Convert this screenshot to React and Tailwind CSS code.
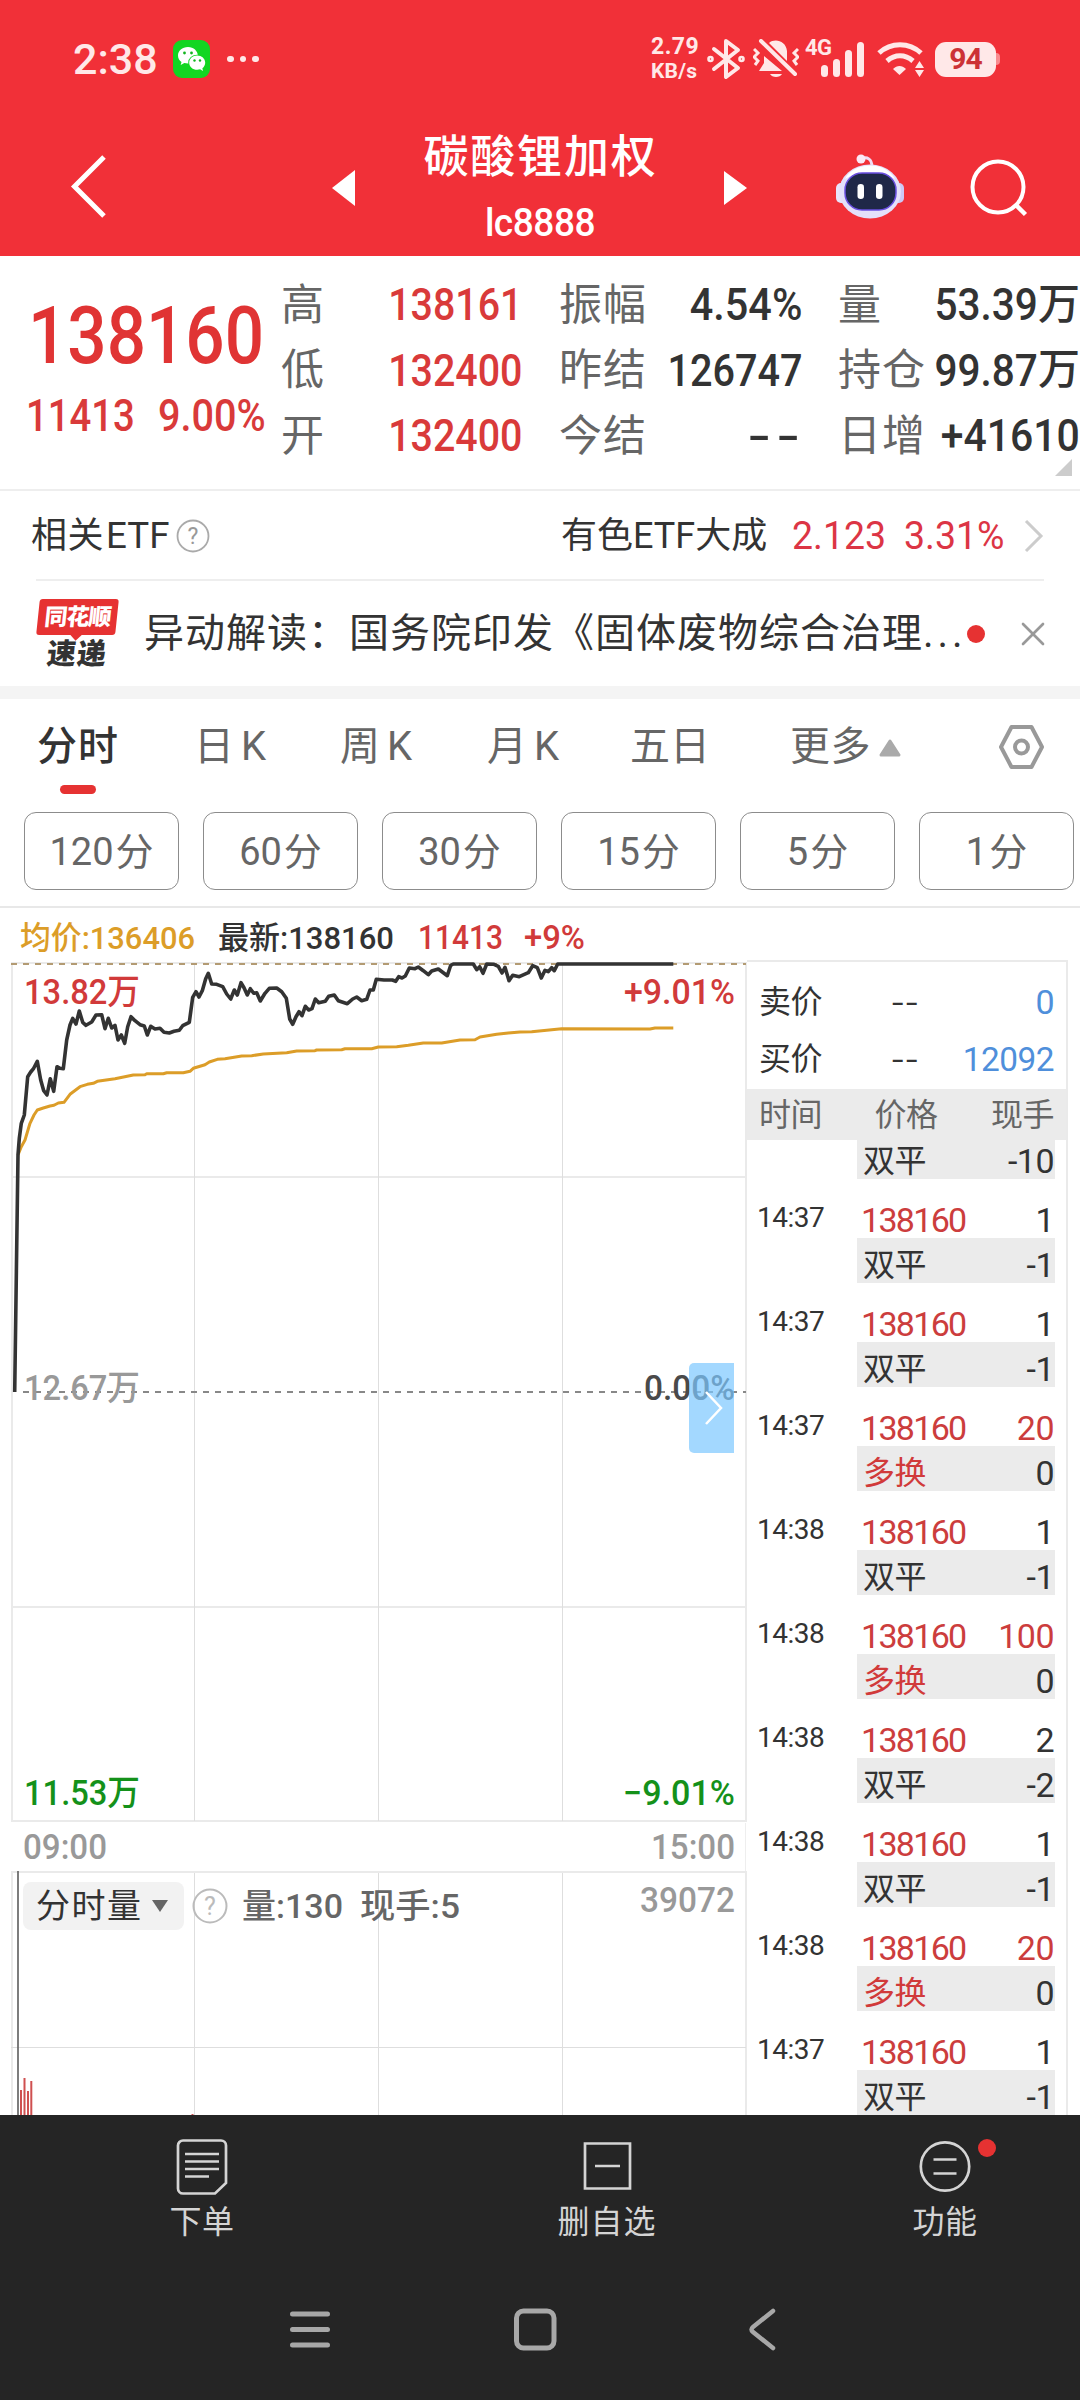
import { X } from 'lucide-react';

const quoteColumns = [
  {
    wrap: 'w-[242px] pl-px',
    rows: [
      { label: '高', value: '138161', up: true, stretch: 'scale-x-[0.875]' },
      { label: '低', value: '132400', up: true, stretch: 'scale-x-[0.875]' },
      { label: '开', value: '132400', up: true, stretch: 'scale-x-[0.875]' },
    ],
  },
  {
    wrap: 'w-[243px] ml-[37px]',
    rows: [
      { label: '振幅', value: '4.54%', stretch: 'scale-x-[0.92]' },
      { label: '昨结', value: '126747', stretch: 'scale-x-[0.88]' },
      { label: '今结', value: '--', stretch: 'scale-x-[1.5] tracking-[4px] mr-[-4px]' },
    ],
  },
  {
    wrap: 'w-[242px] ml-[36px]',
    rows: [
      { label: '量', value: '53.39', unit: '万', stretch: 'scale-x-[0.9]' },
      { label: '持仓', value: '99.87', unit: '万', stretch: 'scale-x-[0.9]' },
      { label: '日增', value: '+41610', stretch: 'scale-x-[0.91]' },
    ],
  },
];

const periods = ['120', '60', '30', '15', '5', '1'];

const ticks = [
  { time: '14:37', vol: '1', type: '双平', diff: '-1' },
  { time: '14:37', vol: '1', type: '双平', diff: '-1' },
  { time: '14:37', vol: '20', big: true, type: '多换', diff: '0' },
  { time: '14:38', vol: '1', type: '双平', diff: '-1' },
  { time: '14:38', vol: '100', big: true, type: '多换', diff: '0' },
  { time: '14:38', vol: '2', type: '双平', diff: '-2' },
  { time: '14:38', vol: '1', type: '双平', diff: '-1' },
  { time: '14:38', vol: '20', big: true, type: '多换', diff: '0' },
  { time: '14:37', vol: '1', type: '双平', diff: '-1' },
];

const priceLine =
  '14.7,430 18,193 19.3,176.3 21.3,161.3 24.3,153 27.7,114.7 30.7,110 33.7,106.3 37.3,99.3 40.7,118 43.7,128.7 47,133 50.3,116.7 53.7,129.3 57,104.7 60,106.3 63.3,106.7 66.7,78 70,63 72.7,56.3 76,62 79.3,49 82.7,60.3 86,63.3 91.7,60 96,53 101.7,52.7 105,66.7 108.3,56.3 111.7,66 115,63.3 118,78 121.3,73 124.7,81.3 127.7,64.7 131,54.7 135,58.7 140,62.7 144.3,64 147.3,73 150.7,64.3 155,67 160,66.3 164,70.3 169.3,71 174,69.3 179.3,68.3 182.7,63.7 189.3,60.3 192.7,35.3 196,29.7 199,35 202.3,28.7 205.7,16.7 208.3,11.3 211.7,22 216.7,22.3 222.7,24.7 226.7,32 230.7,37 234.3,28 237.3,33 241,20.7 244,25.7 247.3,33 250.3,26.7 253.7,31.3 256.7,30.7 260.3,39 265,31.3 269.3,26.3 276.7,26 281.7,29.7 286.3,36.3 289.7,57 292.7,62.3 296,54.7 299,49.7 302,53.7 305.3,44.3 308.7,48 312,46.7 315.3,37 318.7,40.7 325.3,39.3 328.7,34.3 334.3,33 338.3,38.7 347.3,41.7 352.7,37 356.7,35 361.7,38.7 366.7,37.3 370,28 373.3,28 376.3,17.3 384,18 392.3,18 395.7,19.3 398.7,14.7 402,16 405.3,14 409.3,6 415,6.7 418.3,5 423.3,8.7 428.3,12.7 431.7,9 438.3,7 443.3,10.7 447.3,13.7 450.7,3.3 453.3,2 473.3,2 476.7,7.7 479.7,4.7 483,11.3 486.7,2 494,2.3 498.3,4.3 502,11 505,5.3 509,18.7 512.7,13.3 519.3,14.7 528.3,10.7 532.7,3.7 537.3,5.7 541.3,16 545,8.3 548.3,9.7 551.7,5.7 554.3,8.7 557.7,2 673.3,2';

const averageLine =
  '18,193 21.3,184.7 25,178 30,161.3 34,153 37.3,148 43.3,146 50,144 54,143.3 58.3,141 64,140.3 70,132.3 80,124.7 87.3,122.3 93.3,121.3 97.3,119.3 115,116.7 133.3,113 145,112.7 146.7,111.7 163.3,111.7 166.7,110.7 183.3,110.7 190,109.3 193.3,106.3 205,102.7 209.3,100 217.3,97.3 225,96.7 241.7,94 251.7,93.7 263.3,92 286.7,90.7 296.7,89 315,88.7 316.7,88 341.7,87.7 345,86.7 371.7,86.7 378.3,85 396.7,84.7 408.3,83.3 423.3,81 441.7,81 460,78 475,77.7 480,75 496.7,72.3 508.3,71 520,70 531.7,69.7 546.7,68.3 561.7,66.7 650,67 655,66 673.3,66';

// Stretched label used inside the charts, so the digits keep a narrow DIN look
function Label({ x, y, w, size = 35, weight = 500, fill, children }) {
  return (
    <text x={x} y={y} fontSize={size} fontWeight={weight} fill={fill} textLength={w} lengthAdjust="spacingAndGlyphs">
      {children}
    </text>
  );
}

function StatusBar() {
  return (
    <div className="flex h-[118px] items-center justify-between pl-[73px] pr-[80px] text-[#ffe8e8]">
      <div className="flex items-center">
        <span className="w-[84px] text-[43px] font-medium leading-none">2:38</span>
        <svg className="ml-4 h-[38px] w-[37px]" viewBox="0 0 37 38">
          <rect width="37" height="38" rx="9" fill="#12d622" />
          <path d="M15 7c-5.800 0-10 3.800-10 8.500 0 2.700 1.300 5 3.500 6.500l-.8 3 3.600-1.900c1.200.3 2.400.5 3.700.5 5.600 0 9.800-3.700 9.800-8.100S20.700 7 15 7z" fill="#fff" />
          <ellipse cx="24.200" cy="22.700" rx="9" ry="7.900" fill="#12d622" />
          <path d="M24.200 15.600c-4.500 0-8 3.200-8 7.100s3.500 7.100 8 7.100c1 0 2-.2 2.900-.5l2.900 1.700-.6-2.800c1.700-1.300 2.800-3.300 2.800-5.500 0-3.900-3.500-7.100-8-7.100z" fill="#fff" />
          <circle cx="11.500" cy="13" r="1.400" fill="#12b41f" />
          <circle cx="18.500" cy="13" r="1.400" fill="#12b41f" />
          <circle cx="21.500" cy="20.500" r="1.200" fill="#12b41f" />
          <circle cx="27" cy="20.500" r="1.200" fill="#12b41f" />
        </svg>
        <div className="ml-[17px] flex gap-[6px]">
          <i className="size-[6.5px] rounded-full bg-[#ffe8e8]" />
          <i className="size-[6.5px] rounded-full bg-[#ffe8e8]" />
          <i className="size-[6.5px] rounded-full bg-[#ffe8e8]" />
        </div>
      </div>

      <div className="flex items-center">
        <div className="w-[56px] text-[23px] font-bold leading-[24px]">
          <div className="tracking-[0.5px]">2.79</div>
          <div className="text-[21px] tracking-[0.2px]">KB/s</div>
        </div>
        <svg className="h-[42px] w-[38px]" viewBox="0 0 38 42" fill="none" stroke="currentColor" strokeWidth="4" strokeLinejoin="round" strokeLinecap="round">
          <path d="M7 11l24 19-12 9V3l12 9L7 31" />
          <circle cx="3.500" cy="21" r="1.300" />
          <circle cx="34.500" cy="21" r="1.300" />
        </svg>
        <svg className="ml-[8px] h-[40px] w-[46px]" viewBox="0 0 46 40" fill="currentColor">
          <path d="M16 4c6-5 17-2 18 8v10zM11 17l18 15H6l5-8zM17 35h12c-2 4-10 4-12 0z" />
          <path d="M8 2l34 33" stroke="currentColor" strokeWidth="4" strokeLinecap="round" />
          <path d="M1 10l4 4-4 4 4 4-3 4M45 10l-4 4 4 4-4 4 3 4" fill="none" stroke="currentColor" strokeWidth="3" />
        </svg>
        <div className="relative ml-[22px] flex h-[36px] w-[46px] items-end gap-[5px]">
          <span className="absolute -left-[16px] -top-[4px] text-[22px] font-bold leading-[21px] tracking-[-0.5px]">4G</span>
          <i className="h-3 w-[7px] rounded-sm bg-[#ffe8e8]" />
          <i className="h-[18px] w-[7px] rounded-sm bg-[#ffe8e8]" />
          <i className="h-[27px] w-[7px] rounded-sm bg-[#ffe8e8]" />
          <i className="h-[35px] w-[7px] rounded-sm bg-[#ffe8e8]" />
        </div>
        <svg className="ml-[10px] h-[36px] w-[48px]" viewBox="0 0 48 36" fill="none" stroke="currentColor" strokeWidth="5">
          <path d="M2 12c12-11 30-11 42 0M10 20c8-7 18-7 26 0" />
          <path d="M16 28c4-4 9-4 13 0l-6.500 6z" fill="currentColor" stroke="none" />
          <path d="M38 27l4.500-7 4.500 7zM38 29h9l-4.500 7z" fill="currentColor" stroke="none" />
        </svg>
        <div className="ml-[10px] flex h-[35px] w-[61px] items-center justify-center rounded-[11px] bg-[#ffe8e8] text-[30px] font-bold leading-none tracking-[-1px] text-[#cc3236]">94</div>
        <i className="h-3 w-1 rounded-r-sm bg-[#f98b8f]" />
      </div>
    </div>
  );
}

function TitleBar() {
  return (
    <div className="flex h-[138px] text-white">
      <svg className="ml-[70px] mt-[36px] h-[64px] w-[38px]" viewBox="0 0 38 64" fill="none" stroke="currentColor" strokeWidth="5">
        <path d="M34 3L4.500 32.500 34 62" />
      </svg>
      <svg className="ml-[224px] mt-[52px] h-[36px] w-[23px]" viewBox="0 0 23 36" fill="currentColor">
        <path d="M23 0v36L0 18z" />
      </svg>
      <div className="flex w-[369px] flex-col items-center">
        <h1 className="mt-[15px] whitespace-nowrap pl-[2px] text-[45px] font-medium leading-[50px] tracking-[1.8px]">碳酸锂加权</h1>
        <span className="mt-[19px] scale-x-[0.95] text-[39px] font-medium leading-[42px] tracking-[-0.5px]">lc8888</span>
      </div>
      <svg className="mt-[52px] h-[36px] w-[23px]" viewBox="0 0 23 36" fill="currentColor">
        <path d="M0 1v34l23-17z" />
      </svg>
      <svg className="ml-[88px] mt-[35px] h-[66px] w-[70px]" viewBox="0 0 70 66">
        <path d="M26 6c6-3 11 0 11 8" fill="none" stroke="#f0dcf4" strokeWidth="3" />
        <circle cx="26" cy="6" r="4.500" fill="#fbe9f6" />
        <rect x="1" y="30" width="12" height="20" rx="5" fill="#e8e4fb" />
        <rect x="57" y="30" width="12" height="20" rx="5" fill="#cdc8f5" />
        <ellipse cx="35" cy="38.500" rx="31" ry="27" fill="#e4e0fa" />
        <path d="M10 26c8-17 40-19 50 0-14-9-36-9-50 0z" fill="#fff" />
        <rect x="10" y="20" width="51" height="37" rx="17" fill="#1f2848" stroke="#6a4fe0" strokeWidth="1.500" />
        <rect x="22.500" y="31" width="6.500" height="15" rx="3.200" fill="#fff" />
        <rect x="41" y="31" width="6.500" height="15" rx="3.200" fill="#fff" />
      </svg>
      <svg className="ml-[65px] mt-[41px] h-[60px] w-[60px]" viewBox="0 0 60 60" fill="none" stroke="currentColor" strokeWidth="4">
        <circle cx="28" cy="28" r="25.500" />
        <path d="M45.500 45.500l10 10" strokeWidth="4.500" />
      </svg>
    </div>
  );
}

function Quote() {
  return (
    <section className="relative flex h-[235px] shrink-0 border-b-2 border-[#eeeeee]">
      <div className="w-[280px] shrink-0 text-[#e03434]">
        <div className="ml-[28px] mt-[42px] w-0 origin-left scale-x-[0.865] whitespace-nowrap text-[80px] font-medium leading-[76px]">138160</div>
        <div className="mt-[18px] flex pl-[26px] text-[44px] font-medium leading-[48px] text-[#d93a3a]">
          <span className="w-[132px] origin-left scale-x-[0.87]">11413</span>
          <span className="origin-left scale-x-[0.9]">9.00%</span>
        </div>
      </div>
      {quoteColumns.map((col) => (
        <div key={col.rows[0].label} className={`${col.wrap} shrink-0 pt-4`}>
          {col.rows.map((row) => (
            <div key={row.label} className="flex h-[65.5px] items-center justify-between whitespace-nowrap">
              <span className="text-[43px] leading-[66px] tracking-[1px] text-[#666666]">{row.label}</span>
              <div className={`flex w-0 items-center justify-end text-[45px] font-medium ${row.up ? 'text-[#d93a3a]' : 'text-[#333333]'}`}>
                <span className={`origin-right ${row.stretch}`}>{row.value}</span>
                {row.unit && <span className="text-[42px] leading-[60px]">{row.unit}</span>}
              </div>
            </div>
          ))}
        </div>
      ))}
      <svg className="absolute bottom-[13px] right-2 size-[17px]" viewBox="0 0 17 17">
        <path d="M17 0v17H0z" fill="#cccccc" />
      </svg>
    </section>
  );
}

function EtfRow() {
  return (
    <div className="flex h-[88px] shrink-0 items-center whitespace-nowrap pl-[31px] pt-[2px] text-[36px] leading-none text-[#333333]">
      <span className="w-[75px] tracking-[0.5px]">相关</span>
      <span className="w-[61px] origin-left scale-x-[1.02]">ETF</span>
      <svg className="ml-[9px] size-[34px]" viewBox="0 0 34 34">
        <circle cx="17" cy="17" r="15.500" fill="none" stroke="#aaaaaa" strokeWidth="1.800" />
        <text x="17" y="25" textAnchor="middle" fontSize="23" fill="#999999">?</text>
      </svg>
      <span className="ml-[351px] w-[231px]">有色ETF大成</span>
      <span className="w-[112px] origin-left scale-x-[0.96] text-[39px] text-[#dc3545]">2.123</span>
      <span className="w-[107px] origin-left scale-x-[0.96] text-[39px] text-[#dc3545]">3.31%</span>
      <svg className="ml-[13px] h-[34px] w-[20px]" viewBox="0 0 20 34" fill="none" stroke="#cccccc" strokeWidth="3">
        <path d="M2 2l15 15L2 32" />
      </svg>
    </div>
  );
}

function NewsRow() {
  return (
    <div className="mx-9 flex h-[107px] shrink-0 items-center border-t-2 border-[#eeeeee]">
      <div className="flex w-[83px] shrink-0 flex-col items-center">
        <div className="relative flex h-[36px] w-[79px] -skew-x-6 items-center justify-center rounded-[3px] bg-[#e63232] text-[23px] font-black leading-none tracking-[-1px] text-white">
          同花顺
          <i className="absolute -bottom-[4px] left-[36px] size-2 rotate-45 bg-[#e63232]" />
        </div>
        <div className="mt-[5px] -skew-x-6 text-[29px] font-black leading-[28px] tracking-[1px] text-[#333333]">速递</div>
      </div>
      <p className="ml-[25px] w-[823px] shrink-0 whitespace-nowrap text-[40px] leading-none tracking-[1px] text-[#333333]">异动解读：国务院印发《固体废物综合治理<span className="tracking-[4px]">...</span></p>
      <i className="size-[18px] shrink-0 rounded-full bg-[#e63232]" />
      <X className="ml-[28px] shrink-0 text-[#999999]" size={40} strokeWidth={1.6} />
    </div>
  );
}

function Tabs() {
  return (
    <nav className="flex h-[113px] shrink-0 whitespace-nowrap pt-[19px] text-[40px] leading-[58px] text-[#666666]">
      <div className="ml-[37px] flex w-[157px] flex-col font-medium tracking-[1px] text-[#333333]">
        分时
        <i className="ml-[23px] mt-[9px] h-[9px] w-9 rounded-full bg-[#e63232]" />
      </div>
      <span className="w-[146px] tracking-[7px]">日K</span>
      <span className="w-[147px] tracking-[7px]">周K</span>
      <span className="w-[143px] tracking-[7px]">月K</span>
      <span className="w-[160px]">五日</span>
      <span className="tracking-[0.5px]">更多</span>
      <svg className="ml-[8px] mt-[21px] h-[18px] w-[22px]" viewBox="0 0 22 18">
        <path d="M11 2l9 14H2z" fill="#aaaaaa" stroke="#aaaaaa" strokeWidth="3" strokeLinejoin="round" />
      </svg>
      <svg className="ml-[97px] mt-[6px] h-[46px] w-[47px]" viewBox="0 0 47 46" fill="none" stroke="#999999" strokeWidth="4" strokeLinejoin="round">
        <path d="M13.500 3h20L44 23 33.500 43h-20L3 23z" />
        <circle cx="23.500" cy="23" r="6.500" />
      </svg>
    </nav>
  );
}

function PriceChart() {
  return (
    <div className="relative h-[861px]">
      <svg className="h-[861px] w-[747px]" viewBox="0 0 747 861">
        <g stroke="#eaeaea" strokeWidth="2" fill="none">
          <path d="M11 1h736M12 0v860M746 0v860M11 215h735M11 645h735M11 859h735" />
          <path d="M194.500 2v857M378.500 2v857M562.500 2v857" stroke="#dedede" strokeWidth="1" />
        </g>
        <path d="M11 2h735" stroke="#b39b73" strokeWidth="2" strokeDasharray="6 6" />
        <path d="M23 430h723" stroke="#888888" strokeWidth="2" strokeDasharray="6 6" />
        <polyline points={averageLine} fill="none" stroke="#dc9d28" strokeWidth="3" strokeLinejoin="round" />
        <polyline points={priceLine} fill="none" stroke="#333333" strokeWidth="3.600" strokeLinejoin="round" />
        <Label x="24" y="42" w="116" fill="#d13a3a">13.82万</Label>
        <Label x="624" y="42" w="111" fill="#d13a3a">+9.01%</Label>
        <Label x="24" y="438" w="116" fill="#999999">12.67万</Label>
        <Label x="644" y="438" w="91" fill="#4a4a4a">0.00%</Label>
        <Label x="24" y="843" w="116" fill="#14911a">11.53万</Label>
        <Label x="623" y="843" w="112" fill="#14911a">−9.01%</Label>
      </svg>
      <button className="absolute left-[689px] top-[401px] flex h-[90px] w-[45px] items-center justify-center rounded-l-[5px] bg-[#7cc8ff]/70">
        <svg className="ml-1 h-[34px] w-[20px]" viewBox="0 0 20 34" fill="none" stroke="#ffffff" strokeWidth="2.500">
          <path d="M2 1l15 16L2 33" />
        </svg>
      </button>
    </div>
  );
}

function VolumeChart() {
  return (
    <div className="relative h-[244px]">
      <svg className="h-[244px] w-[747px]" viewBox="0 0 747 244">
        <path d="M11 1h736M12 0v244M746 0v244" stroke="#eaeaea" strokeWidth="2" />
        <path d="M11 176.500h735M194.500 2v242M378.500 2v242M562.500 2v242" stroke="#dedede" />
        <path d="M18 0v244" stroke="#666666" strokeWidth="1.700" />
        <path d="M21 219v25M24.500 207v37M28 220v24M31.300 210v34" stroke="#cf5050" strokeWidth="2" />
        <path d="M192.500 243v1" stroke="#cf5050" strokeWidth="2" />
        <Label x="640" y="41" w="95" fill="#999999">39072</Label>
      </svg>
      <div className="absolute left-[23px] top-[11px] flex items-center whitespace-nowrap text-[34px] leading-none text-[#666666]">
        <button className="flex h-12 w-[161px] items-center rounded-lg bg-[#f2f2f2] pl-[13px] tracking-[1.5px] text-[#333333]">
          分时量
          <svg className="ml-2 h-3 w-[18px]" viewBox="0 0 18 12">
            <path d="M1 0h16L9 12z" fill="#666666" />
          </svg>
        </button>
        <svg className="ml-[8px] size-[36px]" viewBox="0 0 36 36">
          <circle cx="18" cy="18" r="16.500" fill="none" stroke="#bbbbbb" strokeWidth="2" />
          <text x="18" y="27" textAnchor="middle" fontSize="25" fill="#bbbbbb">?</text>
        </svg>
        <svg className="ml-[14px] h-12 w-[220px]" viewBox="0 0 220 48" fill="#666666">
          <Label x="0" y="36" w="101" size={34} fill="#666666">量:130</Label>
          <Label x="118" y="36" w="100" size={34} fill="#666666">现手:5</Label>
        </svg>
      </div>
    </div>
  );
}

function ChartPane() {
  return (
    <div className="w-[747px] shrink-0">
      <svg className="h-[54px] w-[747px]" viewBox="0 0 747 54">
        <Label x="20" y="41" w="175" size={32} fill="#dc9d28">均价:136406</Label>
        <Label x="218" y="41" w="176" size={32} fill="#333333">最新:138160</Label>
        <Label x="418" y="41" w="85" size={33} fill="#d13a3a">11413</Label>
        <Label x="524" y="41" w="61" size={33} fill="#d13a3a">+9%</Label>
      </svg>
      <PriceChart />
      <svg className="h-[48px] w-[747px]" viewBox="0 0 747 48">
        <path d="M745.500 0v48" stroke="#eeeeee" />
        <Label x="23" y="36" w="84" fill="#999999">09:00</Label>
        <Label x="651" y="36" w="84" fill="#999999">15:00</Label>
      </svg>
      <VolumeChart />
    </div>
  );
}

function TickPane() {
  return (
    <div className="mt-[52px] w-[321px] border-r-2 border-t-2 border-[#eaeaea] text-[32px] leading-none tracking-[-0.5px] text-[#333333]">
      <div className="flex h-[127px] flex-col justify-center gap-[25px] pl-3 pr-3 pt-[9px]">
        <div className="flex h-8 items-center">
          <span className="w-[133px]">卖价</span>
          <span className="origin-left scale-x-[1.3] tracking-[2px]">--</span>
          <span className="ml-auto text-[34px] text-[#4f8fdb]">0</span>
        </div>
        <div className="flex h-8 items-center">
          <span className="w-[133px]">买价</span>
          <span className="origin-left scale-x-[1.3] tracking-[2px]">--</span>
          <span className="ml-auto origin-right scale-x-[0.98] text-[34px] text-[#4f8fdb]">12092</span>
        </div>
      </div>
      <div className="flex h-[51px] items-center justify-between bg-[#ebebeb] pl-3 pr-3 text-[#666666]">
        <span>时间</span>
        <span className="ml-[-1px]">价格</span>
        <span>现手</span>
      </div>
      <div className="ml-[110px] mr-[11px] flex h-[39px] items-center justify-between bg-[#ebebeb] pl-[6px] pr-px pt-[3px]">
        <span>双平</span>
        <span className="text-[34px]">-10</span>
      </div>
      {ticks.map((tick, i) => (
        <div key={i} className="h-[104px]">
          <div className="flex h-[59px] items-center pl-[10px] pr-3 pt-[23px]">
            <span className="w-[104px] pb-[5px] text-[28px]">{tick.time}</span>
            <span className="text-[34px] tracking-[-1.7px] text-[#cc3d3d]">138160</span>
            <span className={`ml-auto text-[34px] ${tick.big ? 'text-[#cc3d3d]' : ''}`}>{tick.vol}</span>
          </div>
          <div className="ml-[110px] mr-[11px] flex h-[45px] items-center justify-between bg-[#ebebeb] pl-[6px] pr-px pt-[9px] leading-[30px]">
            <span className={tick.type === '多换' ? 'text-[#d13a3a]' : ''}>{tick.type}</span>
            <span className="text-[34px]">{tick.diff}</span>
          </div>
        </div>
      ))}
    </div>
  );
}

function BottomBar() {
  return (
    <footer className="h-[285px] shrink-0 bg-[#252525] text-[32px] leading-none text-[#d4d4d4]">
      <div className="flex pt-[23px]">
        <button className="ml-[142px] flex w-[120px] flex-col items-center">
          <svg className="h-[58px] w-[52px]" viewBox="0 0 52 58" fill="none" stroke="currentColor" strokeWidth="2.700">
            <path d="M7 2.500h38a5 5 0 0 1 5 5V45L39 55.500H7a5 5 0 0 1-5-5v-43a5 5 0 0 1 5-5z" />
            <path d="M9 16h34M9 23.500h34M9 31h34M9 38.500h24" />
          </svg>
          <span className="mt-[10px] tracking-[0.5px]">下单</span>
        </button>
        <button className="ml-[285px] flex w-[120px] flex-col items-center">
          <svg className="h-[58px] w-[52px]" viewBox="0 0 52 58" fill="none" stroke="currentColor" strokeWidth="2.700">
            <path d="M4 5.500h45v45H4zM14 28h25" />
          </svg>
          <span className="mt-[10px] tracking-[1px]">删自选</span>
        </button>
        <button className="relative ml-[218px] flex w-[120px] flex-col items-center">
          <svg className="h-[58px] w-[52px]" viewBox="0 0 52 58" fill="none" stroke="currentColor" strokeWidth="2.700">
            <circle cx="26" cy="28.500" r="24.200" />
            <path d="M14.500 21.500h23M14.500 35.500h23" />
          </svg>
          <i className="absolute left-[93px] top-[1px] size-[18px] rounded-full bg-[#e63232]" />
          <span className="mt-[10px] tracking-[0.5px]">功能</span>
        </button>
      </div>
      <svg className="ml-[280px] mt-[67px] h-[50px] w-[510px]" viewBox="280 2305 510 50" fill="none" stroke="#a8a8a8" strokeWidth="5" strokeLinecap="round" strokeLinejoin="round">
        <path d="M292.500 2314h35M292.500 2329.500h35M292.500 2345h35" />
        <rect x="516.500" y="2311" width="37.500" height="37" rx="7" />
        <path d="M773 2311l-20 16q-3 2.500 0 5l20 16" strokeWidth="4.500" />
      </svg>
    </footer>
  );
}

export default function App() {
  return (
    <div className="flex h-[2400px] w-[1080px] flex-col overflow-hidden bg-white font-[Roboto,'Noto_Sans_CJK_SC',sans-serif]">
      <header className="h-[256px] shrink-0 bg-[#f13038]">
        <StatusBar />
        <TitleBar />
      </header>
      <Quote />
      <EtfRow />
      <NewsRow />
      <div className="h-[13px] shrink-0 bg-[#f4f4f4]" />
      <Tabs />
      <div className="flex h-[96px] shrink-0 gap-6 border-b-2 border-[#e8e8e8] pl-6">
        {periods.map((p) => (
          <button key={p} className="h-[78px] w-[155px] shrink-0 rounded-xl border border-[#8c8c8c] pt-[2px] text-[38px] leading-none text-[#666666]">
            {p}<span className="ml-[2px]">分</span>
          </button>
        ))}
      </div>
      <main className="flex h-[1207px] shrink-0 overflow-hidden">
        <ChartPane />
        <TickPane />
      </main>
      <BottomBar />
    </div>
  );
}
